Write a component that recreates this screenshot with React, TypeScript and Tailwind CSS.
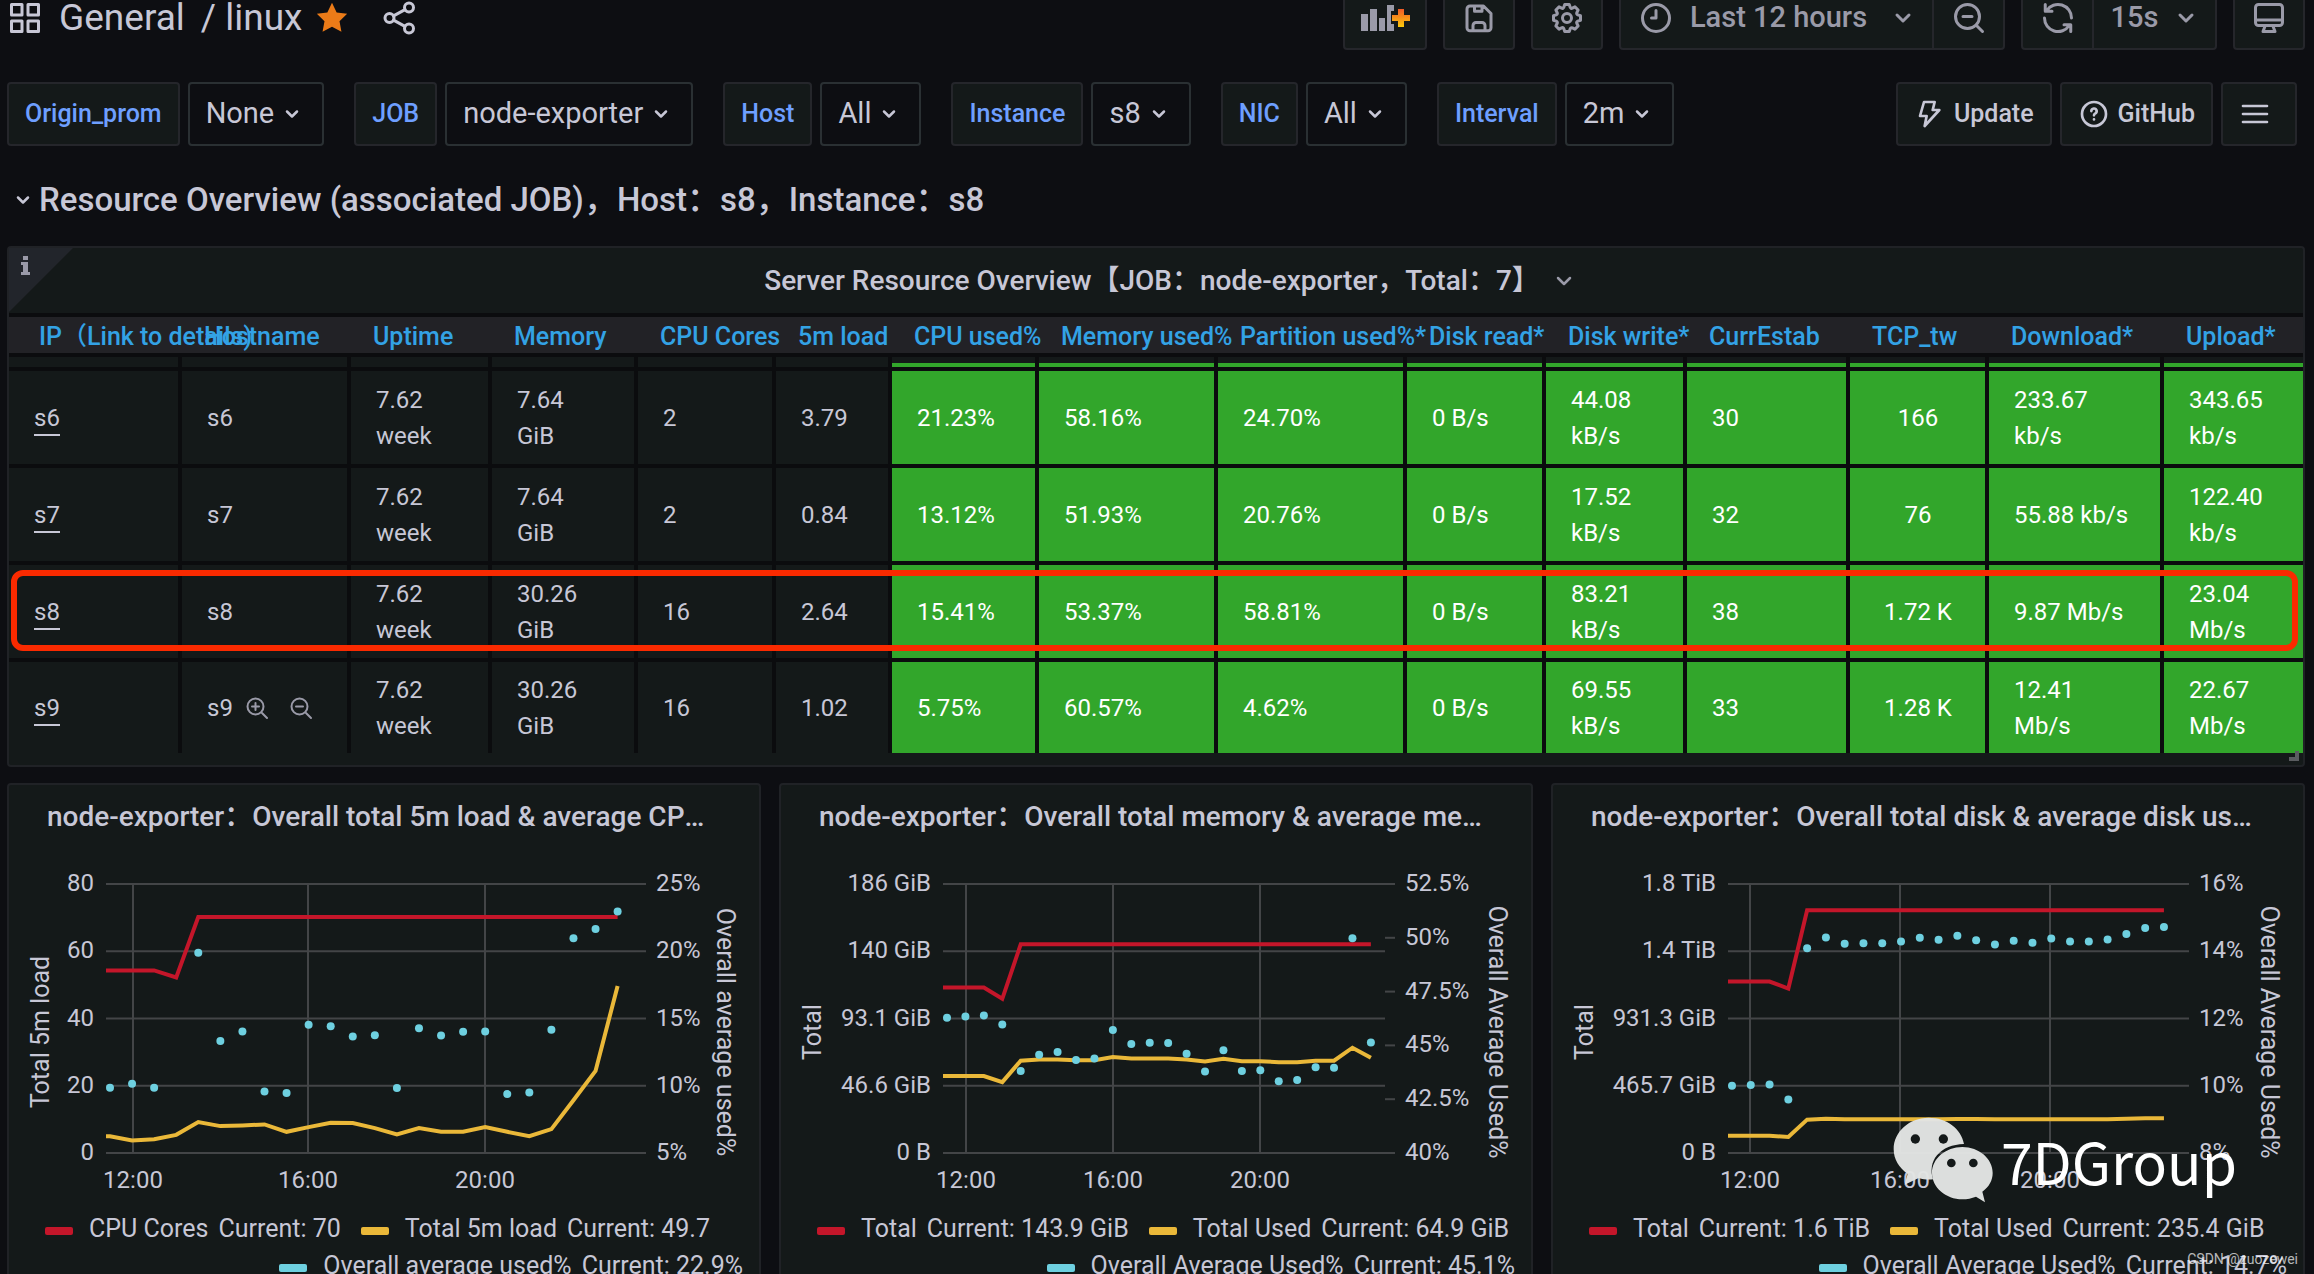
import React from 'react';
import { ChevronDown } from 'lucide-react';

const variables = [
  { label: 'Origin_prom', value: 'None' },
  { label: 'JOB', value: 'node-exporter' },
  { label: 'Host', value: 'All' },
  { label: 'Instance', value: 's8' },
  { label: 'NIC', value: 'All' },
  { label: 'Interval', value: '2m' }
];

const columns = [
  { title: 'IP（Link to details)', width: 'w-[171px]' },
  { title: 'Hostname', width: 'w-[169px]' },
  { title: 'Uptime', width: 'w-[141px]' },
  { title: 'Memory', width: 'w-[146px]' },
  { title: 'CPU Cores', width: 'w-[138px]' },
  { title: '5m load', width: 'w-[116px]' },
  { title: 'CPU used%', width: 'w-[147px]' },
  { title: 'Memory used%', width: 'w-[179px]' },
  { title: 'Partition used%*', width: 'w-[189px]' },
  { title: 'Disk read*', width: 'w-[139px]' },
  { title: 'Disk write*', width: 'w-[141px]' },
  { title: 'CurrEstab', width: 'w-[163px]' },
  { title: 'TCP_tw', width: 'w-[139px]' },
  { title: 'Download*', width: 'w-[175px]' },
  { title: 'Upload*', width: 'w-[141px]' }
];

const FIRST_COLORED = 6;
const TCP_COLUMN = 12;

const servers = [
  ['s6', 's6', '7.62 week', '7.64 GiB', '2', '3.79', '21.23%', '58.16%', '24.70%', '0 B/s', '44.08 kB/s', '30', '166', '233.67 kb/s', '343.65 kb/s'],
  ['s7', 's7', '7.62 week', '7.64 GiB', '2', '0.84', '13.12%', '51.93%', '20.76%', '0 B/s', '17.52 kB/s', '32', '76', '55.88 kb/s', '122.40 kb/s'],
  ['s8', 's8', '7.62 week', '30.26 GiB', '16', '2.64', '15.41%', '53.37%', '58.81%', '0 B/s', '83.21 kB/s', '38', '1.72 K', '9.87 Mb/s', '23.04 Mb/s'],
  ['s9', 's9', '7.62 week', '30.26 GiB', '16', '1.02', '5.75%', '60.57%', '4.62%', '0 B/s', '69.55 kB/s', '33', '1.28 K', '12.41 Mb/s', '22.67 Mb/s']
];

interface ChartConfig {
  title: string;
  plot: { left: number; right: number; first: number; step: number };
  hours: number[];
  leftTitle: string;
  rightTitle: string;
  leftLabels: string[];
  rightLabels: string[];
  leftMax: number;
  rightMin: number;
  rightMax: number;
  total: number[];
  used: number[];
  percent: (number | null)[];
  legend: { name: string; current: string }[];
}

const charts: ChartConfig[] = [
  {
    title: 'node-exporter：Overall total 5m load & average CPU used%',
    plot: { left: 97, right: 627, first: 101, step: 22.07 },
    hours: [124, 299, 476],
    leftTitle: 'Total 5m load',
    rightTitle: 'Overall average used%',
    leftLabels: ['80', '60', '40', '20', '0'],
    rightLabels: ['25%', '20%', '15%', '10%', '5%'],
    leftMax: 80,
    rightMin: 5,
    rightMax: 25,
    total: [54.3, 54.3, 54.3, 52.2, ...Array(20).fill(70.2)],
    used: [5, 3.7, 4.1, 5.4, 9.2, 8, 8.2, 8.5, 6.3, 7.7, 9, 8.9, 7.4, 5.5, 7.4, 6.3, 6.3, 7.7, 6.3, 5, 7.1, 15.7, 24.4, 49.7],
    percent: [9.85, 10.15, 9.85, null, 19.88, 13.32, 14.03, 9.58, 9.46, 14.53, 14.43, 13.66, 13.76, 9.83, 14.28, 13.74, 14.01, 14.03, 9.38, 9.5, 14.16, 20.97, 21.66, 22.95],
    legend: [
      { name: 'CPU Cores', current: '70' },
      { name: 'Total 5m load', current: '49.7' },
      { name: 'Overall average used%', current: '22.9%' }
    ]
  },
  {
    title: 'node-exporter：Overall total memory & average memory used%',
    plot: { left: 162, right: 604, first: 166, step: 18.43 },
    hours: [185, 332, 479],
    leftTitle: 'Total',
    rightTitle: 'Overall Average Used%',
    leftLabels: ['186 GiB', '140 GiB', '93.1 GiB', '46.6 GiB', '0 B'],
    rightLabels: ['52.5%', '50%', '47.5%', '45%', '42.5%', '40%'],
    leftMax: 186.3,
    rightMin: 40,
    rightMax: 52.5,
    total: [114.6, 114.6, 114.6, 106.8, ...Array(20).fill(144.5)],
    used: [53.3, 53.3, 53.3, 49.1, 63.9, 64.8, 64.8, 64.3, 64.3, 66.4, 65.5, 65.5, 65.5, 64.8, 63.4, 65.2, 63.6, 63.6, 62.9, 62.9, 63.9, 63.9, 72.9, 65.9],
    percent: [46.28, 46.34, 46.39, 45.97, 43.81, 44.56, 44.69, 44.32, 44.39, 45.72, 45.07, 45.12, 45.11, 44.61, 43.79, 44.78, 43.81, 43.85, 43.33, 43.39, 43.99, 43.96, 49.98, 45.14],
    legend: [
      { name: 'Total', current: '143.9 GiB' },
      { name: 'Total Used', current: '64.9 GiB' },
      { name: 'Overall Average Used%', current: '45.1%' }
    ]
  },
  {
    title: 'node-exporter：Overall total disk & average disk used%',
    plot: { left: 175, right: 626, first: 179, step: 18.78 },
    hours: [197, 347, 497],
    leftTitle: 'Total',
    rightTitle: 'Overall Average Used%',
    leftLabels: ['1.8 TiB', '1.4 TiB', '931.3 GiB', '465.7 GiB', '0 B'],
    rightLabels: ['16%', '14%', '12%', '10%', '8%'],
    leftMax: 1862.6,
    rightMin: 8,
    rightMax: 16,
    total: [1187, 1187, 1187, 1139, ...Array(20).fill(1680)],
    used: [120, 120, 120, 111, 231, 237, 233, 233, 233, 233, 233, 233, 236, 235, 233, 234, 233, 234, 234, 233, 234, 237, 240, 240],
    percent: [10, 10.02, 10.04, 9.59, 14.09, 14.41, 14.22, 14.24, 14.24, 14.29, 14.4, 14.34, 14.46, 14.33, 14.2, 14.31, 14.25, 14.38, 14.29, 14.29, 14.35, 14.51, 14.69, 14.72],
    legend: [
      { name: 'Total', current: '1.6 TiB' },
      { name: 'Total Used', current: '235.4 GiB' },
      { name: 'Overall Average Used%', current: '14.7%' }
    ]
  }
];

const legendColors = ['bg-[#c4162a]', 'bg-[#eab839]', 'bg-[#6ed0e0]'];

const PLOT_TOP = 35;
const PLOT_BOTTOM = 304;

const toolButton =
  'flex h-16 items-center justify-center rounded-sm border-2 border-[#25262b] bg-[#141919] text-[#9a9aa8]';

const Icon: React.FC<{ className?: string; children: React.ReactNode }> = ({ className = 'size-9', children }) => (
  <svg
    viewBox="0 0 24 24"
    className={`shrink-0 ${className}`}
    fill="none"
    stroke="currentColor"
    strokeWidth="2"
    strokeLinecap="round"
    strokeLinejoin="round"
    aria-hidden="true"
  >
    {children}
  </svg>
);

const Toolbar: React.FC = () => (
  <header className="-mt-[14px] flex items-center gap-4">
    <div className="flex flex-1 items-center">
      <Icon>
        <path d="M3 3h7v7H3zM14 3h7v7h-7zM3 14h7v7H3zM14 14h7v7h-7z" />
      </Icon>
      <nav className="ml-4 flex gap-4 text-[37px] leading-10">
        <a href="#general">General</a>
        <a href="#linux">/ linux</a>
      </nav>
      <button type="button" aria-label="Unmark as favorite" className="ml-3 text-[#eb7b18]">
        <svg viewBox="0 0 24 24" className="size-9" fill="currentColor" aria-hidden="true">
          <path d="M12 1.8l3.1 6.5 7 .9-5.1 4.9 1.3 7.1-6.3-3.4-6.3 3.4L7 14.1 1.9 9.2l7-.9z" />
        </svg>
      </button>
      <button type="button" aria-label="Share dashboard" className="ml-8">
        <Icon>
          <circle cx="18" cy="5" r="3" />
          <circle cx="5" cy="12" r="3" />
          <circle cx="18" cy="19" r="3" />
          <path d="M7.7 10.6l7.6-4.2M7.7 13.4l7.6 4.2" />
        </Icon>
      </button>
    </div>
    <div className="flex gap-4 pr-[9px]">
      <button type="button" aria-label="Add panel" className={`${toolButton} w-[84px]`}>
        <svg viewBox="0 0 50 32" className="h-8 w-[50px]" aria-hidden="true">
          <defs>
            <linearGradient id="plus" x1="0" y1="0" x2="0" y2="1">
              <stop offset="0" stopColor="#f05a28" />
              <stop offset="1" stopColor="#fbca0a" />
            </linearGradient>
          </defs>
          <path d="M1 12h7v17H1zM10 7h7v22h-7zM19 16h6v13h-6zM27 3h7v6h-3v13h3v7h-7z" fill="#9a9aa8" />
          <path d="M38 7h6v6h6v6h-6v6h-6v-6h-6v-6h6z" fill="url(#plus)" />
        </svg>
      </button>
      <button type="button" aria-label="Save dashboard" className={`${toolButton} w-[72px]`}>
        <Icon>
          <path d="M6 4h9l5 5v9.500a2 2 0 0 1-2 2H6a2 2 0 0 1-2-2V6a2 2 0 0 1 2-2zM9 4v3.500h5V4M8 20.500V17a2 2 0 0 1 2-2h4a2 2 0 0 1 2 2v3.500" />
        </Icon>
      </button>
      <button type="button" aria-label="Dashboard settings" className={`${toolButton} w-[72px]`}>
        <svg viewBox="0 0 24 24" className="size-9 shrink-0" fill="currentColor" aria-hidden="true">
          <path d="M21.32,9.55l-1.89-.63.89-1.78A1,1,0,0,0,20.13,6L18,3.87a1,1,0,0,0-1.15-.19l-1.78.89-.63-1.89A1,1,0,0,0,13.5,2h-3a1,1,0,0,0-.95.68L8.92,4.57,7.14,3.68A1,1,0,0,0,6,3.87L3.87,6a1,1,0,0,0-.19,1.15l.89,1.78-1.89.63A1,1,0,0,0,2,10.5v3a1,1,0,0,0,.68.95l1.89.63-.89,1.78A1,1,0,0,0,3.87,18L6,20.13a1,1,0,0,0,1.15.19l1.78-.89.63,1.89a1,1,0,0,0,.95.68h3a1,1,0,0,0,.95-.68l.63-1.89,1.78.89A1,1,0,0,0,18,20.13L20.13,18a1,1,0,0,0,.19-1.15l-.89-1.78,1.89-.63A1,1,0,0,0,22,13.5v-3A1,1,0,0,0,21.32,9.55ZM20,12.78l-1.2.4A2,2,0,0,0,17.64,16l.57,1.14-1.1,1.1L16,17.64a2,2,0,0,0-2.79,1.16l-.4,1.2H11.22l-.4-1.2A2,2,0,0,0,8,17.64l-1.14.57-1.1-1.1L6.36,16A2,2,0,0,0,5.2,13.18L4,12.78V11.22l1.2-.4A2,2,0,0,0,6.36,8L5.79,6.89l1.1-1.1L8,6.36A2,2,0,0,0,10.82,5.2l.4-1.2h1.56l.4,1.2A2,2,0,0,0,16,6.36l1.14-.57,1.1,1.1L17.64,8a2,2,0,0,0,1.16,2.79l1.2.4ZM12,8a4,4,0,1,0,4,4A4,4,0,0,0,12,8Zm0,6a2,2,0,1,1,2-2A2,2,0,0,1,12,14Z" />
        </svg>
      </button>
      <div className="flex">
        <button type="button" className={`${toolButton} w-[315px] gap-4 rounded-r-none text-[29px] font-medium`}>
          <Icon>
            <circle cx="12" cy="12" r="9" />
            <path d="M12 7v5H9" />
          </Icon>
          Last 12 hours
          <ChevronDown className="ml-2 size-6" strokeWidth={3} />
        </button>
        <button type="button" aria-label="Zoom out time range" className={`${toolButton} -ml-0.5 w-[73px] rounded-l-none`}>
          <Icon>
            <circle cx="11" cy="11" r="8" />
            <path d="M8 11h6M17 17l4 4" />
          </Icon>
        </button>
      </div>
      <div className="flex">
        <button type="button" aria-label="Refresh dashboard" className={`${toolButton} w-[73px] rounded-r-none`}>
          <Icon>
            <path d="M3.5 3v4.500H8M4.500 7A9 9 0 0 1 21 12M20.500 21v-4.500H16M19.500 17A9 9 0 0 1 3 12" />
          </Icon>
        </button>
        <button type="button" className={`${toolButton} -ml-0.5 w-[125px] gap-4 rounded-l-none text-[29px] font-medium`}>
          15s
          <ChevronDown className="size-6" strokeWidth={3} />
        </button>
      </div>
      <button type="button" aria-label="Cycle view mode" className={`${toolButton} w-[72px]`}>
        <Icon>
          <rect x="3" y="3" width="18" height="14" rx="2" />
          <path d="M3 13.300h18M9.500 17L8 21h8l-1.500-4" />
        </Icon>
      </button>
    </div>
  </header>
);

const VariableBar: React.FC = () => (
  <div className="mt-8 flex items-center justify-between pr-[17px]">
    <div className="flex gap-[30px]">
      {variables.map((variable) => (
        <div key={variable.label} className="flex gap-2">
          <label
            htmlFor={variable.label}
            className="flex h-16 items-center rounded-sm border-2 border-[#25262b] bg-[#141919] px-4 text-[25px] font-medium text-[#6e9fff]"
          >
            {variable.label}
          </label>
          <button
            type="button"
            id={variable.label}
            className="flex h-16 items-center gap-2 rounded-sm border-2 border-[#2a3033] pr-5 pl-4 text-[29px]"
          >
            {variable.value}
            <ChevronDown className="size-5" strokeWidth={3} />
          </button>
        </div>
      ))}
    </div>
    <div className="flex gap-2 text-[25px] font-medium">
      <a href="#update" className="flex h-16 items-center gap-2 rounded-sm border-2 border-[#25262b] bg-[#141919] px-4">
        <Icon className="size-8">
          <path d="M7.500 3h8L14 9h5L8 21l1.500-7.500h-5z" />
        </Icon>
        Update
      </a>
      <a href="#github" className="flex h-16 items-center gap-2 rounded-sm border-2 border-[#25262b] bg-[#141919] px-4">
        <Icon className="size-8">
          <circle cx="12" cy="12" r="9" />
          <path d="M10 9.800a2 2 0 1 1 2.800 1.900c-.5.300-.8.700-.8 1.300M12 16v.1" />
        </Icon>
        GitHub
      </a>
      <button
        type="button"
        aria-label="Dashboard links"
        className="flex h-16 w-[76px] items-center rounded-sm border-2 border-[#25262b] bg-[#141919] pl-4"
      >
        <Icon className="size-8">
          <path d="M3 6h18M3 12h18M3 18h18" />
        </Icon>
      </button>
    </div>
  </div>
);

const ServerTable: React.FC = () => (
  <section className="relative mt-6 mr-[9px] rounded-sm border-2 border-[#202226] bg-[#141919] pb-3">
    <svg viewBox="0 0 64 64" className="absolute top-0 left-0 size-16" aria-hidden="true">
      <path d="M0 0h64L0 64z" fill="#22252b" />
      <path d="M14 8h5v4h-5zM12 14h7v10h2v3h-9v-3h2v-7h-2z" fill="#9a9aa8" />
    </svg>
    <h2 className="flex h-[65px] items-center justify-center gap-3 pl-7 text-[28px] font-medium">
      Server Resource Overview【JOB：node-exporter，Total：7】
      <ChevronDown className="size-6 text-[#9a9aa8]" strokeWidth={2.5} />
    </h2>
    <table className="w-full table-fixed border-collapse text-left text-[24px]">
      <thead>
        <tr className="h-10 border-y-4 border-[#0b0c0e] bg-[#222226] text-[25px] leading-8 text-[#33a2e5]">
          {columns.map((column, index) => (
            <th
              key={column.title}
              className={`${column.width} ${index === 0 ? 'pl-[30px]' : 'pl-6'} pt-1 pr-0 pb-0 font-medium whitespace-nowrap`}
            >
              {column.title}
            </th>
          ))}
        </tr>
      </thead>
      <tbody>
        {/* last visible edge of the row scrolled under the header */}
        <tr aria-hidden="true">
          {columns.map((column, index) => (
            <td key={column.title} className="border-r-4 border-b-4 border-[#0b0c0e] p-0 last:border-r-0">
              <div className={`mt-1.5 h-1 ${index >= FIRST_COLORED ? 'bg-[#32a62b]' : ''}`} />
            </td>
          ))}
        </tr>
        {servers.map((server) => (
          <tr key={server[0]} className="group">
            {server.map((value, index) => (
              <td
                key={columns[index].title}
                className={`h-[97px] border-r-4 border-b-4 border-[#0b0c0e] py-0 pl-[25px] leading-9 group-last:h-[93px] group-last:border-b-0 last:border-r-0 ${
                  index >= FIRST_COLORED ? 'bg-[#32a62b] text-white' : ''
                } ${index === TCP_COLUMN ? 'pr-6 text-center' : 'pr-[29px]'}`}
              >
                {index === 0 ? (
                  <a href={`#${value}`} className="border-b-2 border-current pb-0.5">
                    {value}
                  </a>
                ) : index === 1 && value === 's9' ? (
                  <span className="flex items-center gap-3">
                    {value}
                    <button type="button" aria-label="Filter for value" className="text-[#9a9aa8]">
                      <Icon className="size-6">
                        <circle cx="10.5" cy="10.5" r="8" />
                        <path d="M17 17l5 5M7 10.500h7M10.500 7v7" />
                      </Icon>
                    </button>
                    <button type="button" aria-label="Filter out value" className="ml-2 text-[#9a9aa8]">
                      <Icon className="size-6">
                        <circle cx="10.5" cy="10.5" r="8" />
                        <path d="M17 17l5 5M7 10.500h7" />
                      </Icon>
                    </button>
                  </span>
                ) : (
                  value
                )}
              </td>
            ))}
          </tr>
        ))}
      </tbody>
    </table>
    {/* highlight around s8 */}
    <div className="absolute top-[322px] right-[5px] left-0.5 h-[81px] rounded-xl border-[6px] border-[#fa2a00]" />
    <div className="absolute right-1 bottom-1 size-2.5 border-r-4 border-b-4 border-[#5a5c60]" />
  </section>
);

const Chart: React.FC<{ chart: ChartConfig }> = ({ chart }) => {
  const { plot } = chart;
  const height = PLOT_BOTTOM - PLOT_TOP;
  const x = (index: number) => plot.first + index * plot.step;
  const yLeft = (value: number) => PLOT_BOTTOM - (value / chart.leftMax) * height;
  const yRight = (value: number) =>
    PLOT_BOTTOM - ((value - chart.rightMin) / (chart.rightMax - chart.rightMin)) * height;
  const line = (values: number[]) =>
    [`${plot.left},${yLeft(values[0])}`, ...values.map((value, index) => `${x(index)},${yLeft(value)}`)].join(' ');
  const labelY = (index: number, count: number) => PLOT_TOP + (height * index) / (count - 1);

  return (
    <svg viewBox="0 0 750 361" className="block w-full" fill="#c7c7d6" fontSize="24" role="img" aria-label={chart.title}>
      <g stroke="#434547" strokeWidth="2">
        {chart.leftLabels.map((label, index) => (
          <path key={label} d={`M${plot.left} ${labelY(index, 5)}H${plot.right}`} />
        ))}
        {chart.rightLabels.map((label, index) => (
          <path key={label} d={`M${plot.right} ${labelY(index, chart.rightLabels.length)}h10`} />
        ))}
        {chart.hours.map((hour) => (
          <path key={hour} d={`M${hour} ${PLOT_TOP}V${PLOT_BOTTOM}`} />
        ))}
      </g>
      {chart.leftLabels.map((label, index) => (
        <text key={label} x={plot.left - 12} y={labelY(index, 5) + 7} textAnchor="end">
          {label}
        </text>
      ))}
      {chart.rightLabels.map((label, index) => (
        <text key={label} x={plot.right + 20} y={labelY(index, chart.rightLabels.length) + 7}>
          {label}
        </text>
      ))}
      {['12:00', '16:00', '20:00'].map((label, index) => (
        <text key={label} x={chart.hours[index]} y={339} textAnchor="middle">
          {label}
        </text>
      ))}
      <text transform="translate(40 183) rotate(-90)" fontSize="25" textAnchor="middle">
        {chart.leftTitle}
      </text>
      <text transform="translate(708 183) rotate(90)" fontSize="25" textAnchor="middle">
        {chart.rightTitle}
      </text>
      <g fill="none" strokeWidth="4">
        <polyline points={line(chart.total)} stroke="#c4162a" />
        <polyline points={line(chart.used)} stroke="#eab839" />
      </g>
      {chart.percent.map((value, index) =>
        value === null ? null : <circle key={index} cx={x(index)} cy={yRight(value)} r="4" fill="#6ed0e0" />
      )}
    </svg>
  );
};

const ChartPanel: React.FC<{ chart: ChartConfig }> = ({ chart }) => (
  <section className="min-w-0 rounded-sm border-2 border-[#202226] bg-[#141919] pb-4">
    <h2 className="h-16 truncate pr-12 pl-[38px] text-[28px] leading-[64px] font-medium">{chart.title}</h2>
    <Chart chart={chart} />
    <ul className="flex flex-wrap gap-x-5 pr-4 pl-9 text-[25px] leading-[37px] whitespace-nowrap">
      {chart.legend.map((item, index) => (
        <li key={item.name} className="flex items-center last:ml-auto">
          <span className={`mt-1 mr-4 h-2 w-7 rounded-xs ${legendColors[index]}`} />
          <span className="mr-2.5">{item.name}</span>
          <span>Current: {item.current}</span>
        </li>
      ))}
    </ul>
  </section>
);

const Watermark: React.FC = () => (
  <div className="pointer-events-none absolute top-[1115px] right-[77px] flex items-center gap-2 font-['Noto_Sans_CJK_SC',sans-serif] text-[57px] leading-[90px] text-white">
    <svg viewBox="65 53 300 264" className="h-[88px] w-[100px]" aria-hidden="true">
      <g fill="#e3e5e4" opacity="0.97">
        <path d="M172 58C114 58 67 100 67 152c0 31 16 57 42 74l-9 33 42-20c14 4 28 6 43 4-8-25-5-52 12-72 19-22 46-33 81-34C270 91 226 58 172 58z" />
        <path d="M273 146c-50 0-91 35-91 78s41 79 91 79c15 0 28-3 41-8l27 17-8-32c20-14 31-34 31-56 0-43-41-78-91-78z" />
      </g>
      <g fill="#141919">
        <circle cx="132" cy="122" r="14" />
        <circle cx="216" cy="122" r="14" />
        <circle cx="240" cy="194" r="13" />
        <circle cx="306" cy="194" r="13" />
      </g>
    </svg>
    7DGroup
  </div>
);

const App: React.FC = () => {
  return (
    <main className="relative h-screen overflow-hidden bg-[#0d0e12] pl-[7px] font-[Roboto,'Noto_Sans_CJK_SC',sans-serif] text-[#c7c7d6]">
      <Toolbar />
      <VariableBar />
      <h1 className="mt-8 flex items-center text-[33px] leading-11 font-medium">
        <button type="button" aria-label="Collapse row" className="px-1.5">
          <ChevronDown className="size-5" strokeWidth={3} />
        </button>
        Resource Overview (associated JOB)，Host：s8，Instance：s8
      </h1>
      <ServerTable />
      <div className="mt-4 mr-[9px] grid grid-cols-3 gap-[18px]">
        {charts.map((chart) => (
          <ChartPanel key={chart.title} chart={chart} />
        ))}
      </div>
      <Watermark />
      <p className="absolute right-4 bottom-1 text-[14px] text-white/70">CSDN @zuozewei</p>
    </main>
  );
};

export default App;
